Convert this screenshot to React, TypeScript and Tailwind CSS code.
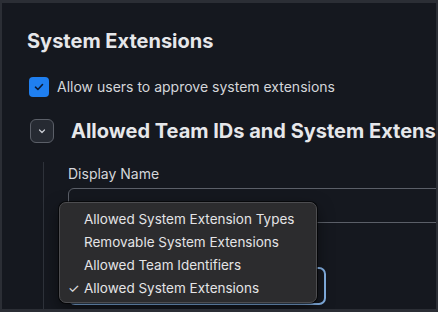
import React from 'react';

const menuItems = [
  { label: 'Allowed System Extension Types', checked: false },
  { label: 'Removable System Extensions', checked: false },
  { label: 'Allowed Team Identifiers', checked: false },
  { label: 'Allowed System Extensions', checked: true },
];

export default function App() {
  return (
    <div className="relative w-[438px] h-[312px] overflow-hidden bg-[#15181f] border-t-[3px] border-l-2 border-r-2 border-b-[3px] border-[#2b2e35] font-['Inter',sans-serif]">
      <div className="pl-[25px] pt-[24px]">
        <h1 className="text-[20px] leading-7 font-bold text-[#e6e7ea]">System Extensions</h1>

        {/* checkbox row */}
        <div className="flex items-center gap-2 mt-[22px] ml-[2px]">
          <div className="w-5 h-5 rounded-[4px] bg-[#1f7ff0] flex items-center justify-center">
            <svg width="12" height="12" viewBox="0 0 12 12" fill="none">
              <path d="M2.5 6.2l2.4 2.3 4.6-5" stroke="#0b1a33" strokeWidth="1.6" strokeLinecap="round" strokeLinejoin="round" />
            </svg>
          </div>
          <span className="text-[14px] leading-5 text-[#d4d6da]">Allow users to approve system extensions</span>
        </div>

        {/* section heading */}
        <div className="flex items-center mt-[20px] ml-[3px] whitespace-nowrap">
          <button className="w-6 h-6 shrink-0 rounded-[6px] border border-[#5b5f68] bg-[#262a32] flex items-center justify-center">
            <svg width="10" height="10" viewBox="0 0 10 10" fill="none">
              <path d="M2.5 4l2.5 2.5L7.5 4" stroke="#c9ccd2" strokeWidth="1.2" strokeLinecap="round" strokeLinejoin="round" />
            </svg>
          </button>
          <h2 className="ml-[17px] text-[20px] leading-7 font-bold text-[#e6e7ea]">Allowed Team IDs and System Extensions</h2>
        </div>

        {/* section body */}
        <div className="ml-[16px] mt-[17px] border-l border-[#2e323a] pl-[24px] pt-[2px] h-[160px]">
          <label className="block text-[14px] leading-5 text-[#d4d6da]">Display Name</label>
          <div className="mt-[4px] h-[35px] w-[400px] rounded-[6px] border border-[#5b5f68]" />
          <div className="mt-[8px] h-5" />
          <div className="mt-[16px] h-[38px] w-[258px] rounded-[7px] border-2 border-[#86b4e8]" />
        </div>
      </div>

      {/* open select menu */}
      <div className="absolute left-[57px] top-[199px] w-[258px] h-[101px] rounded-[7px] bg-[#2c2c2e] border border-[#4d4d50] shadow-[0_0_0_1px_rgba(0,0,0,0.6),0_6px_16px_rgba(0,0,0,0.5)] pt-[5px]">
        {menuItems.map((item) => (
          <div key={item.label} className="relative h-[23px] flex items-center pl-[24px] text-[13.5px] text-[#e4e4e6]">
            {item.checked && <span className="absolute left-[8px] text-[13px]">✓</span>}
            {item.label}
          </div>
        ))}
      </div>
    </div>
  );
}
